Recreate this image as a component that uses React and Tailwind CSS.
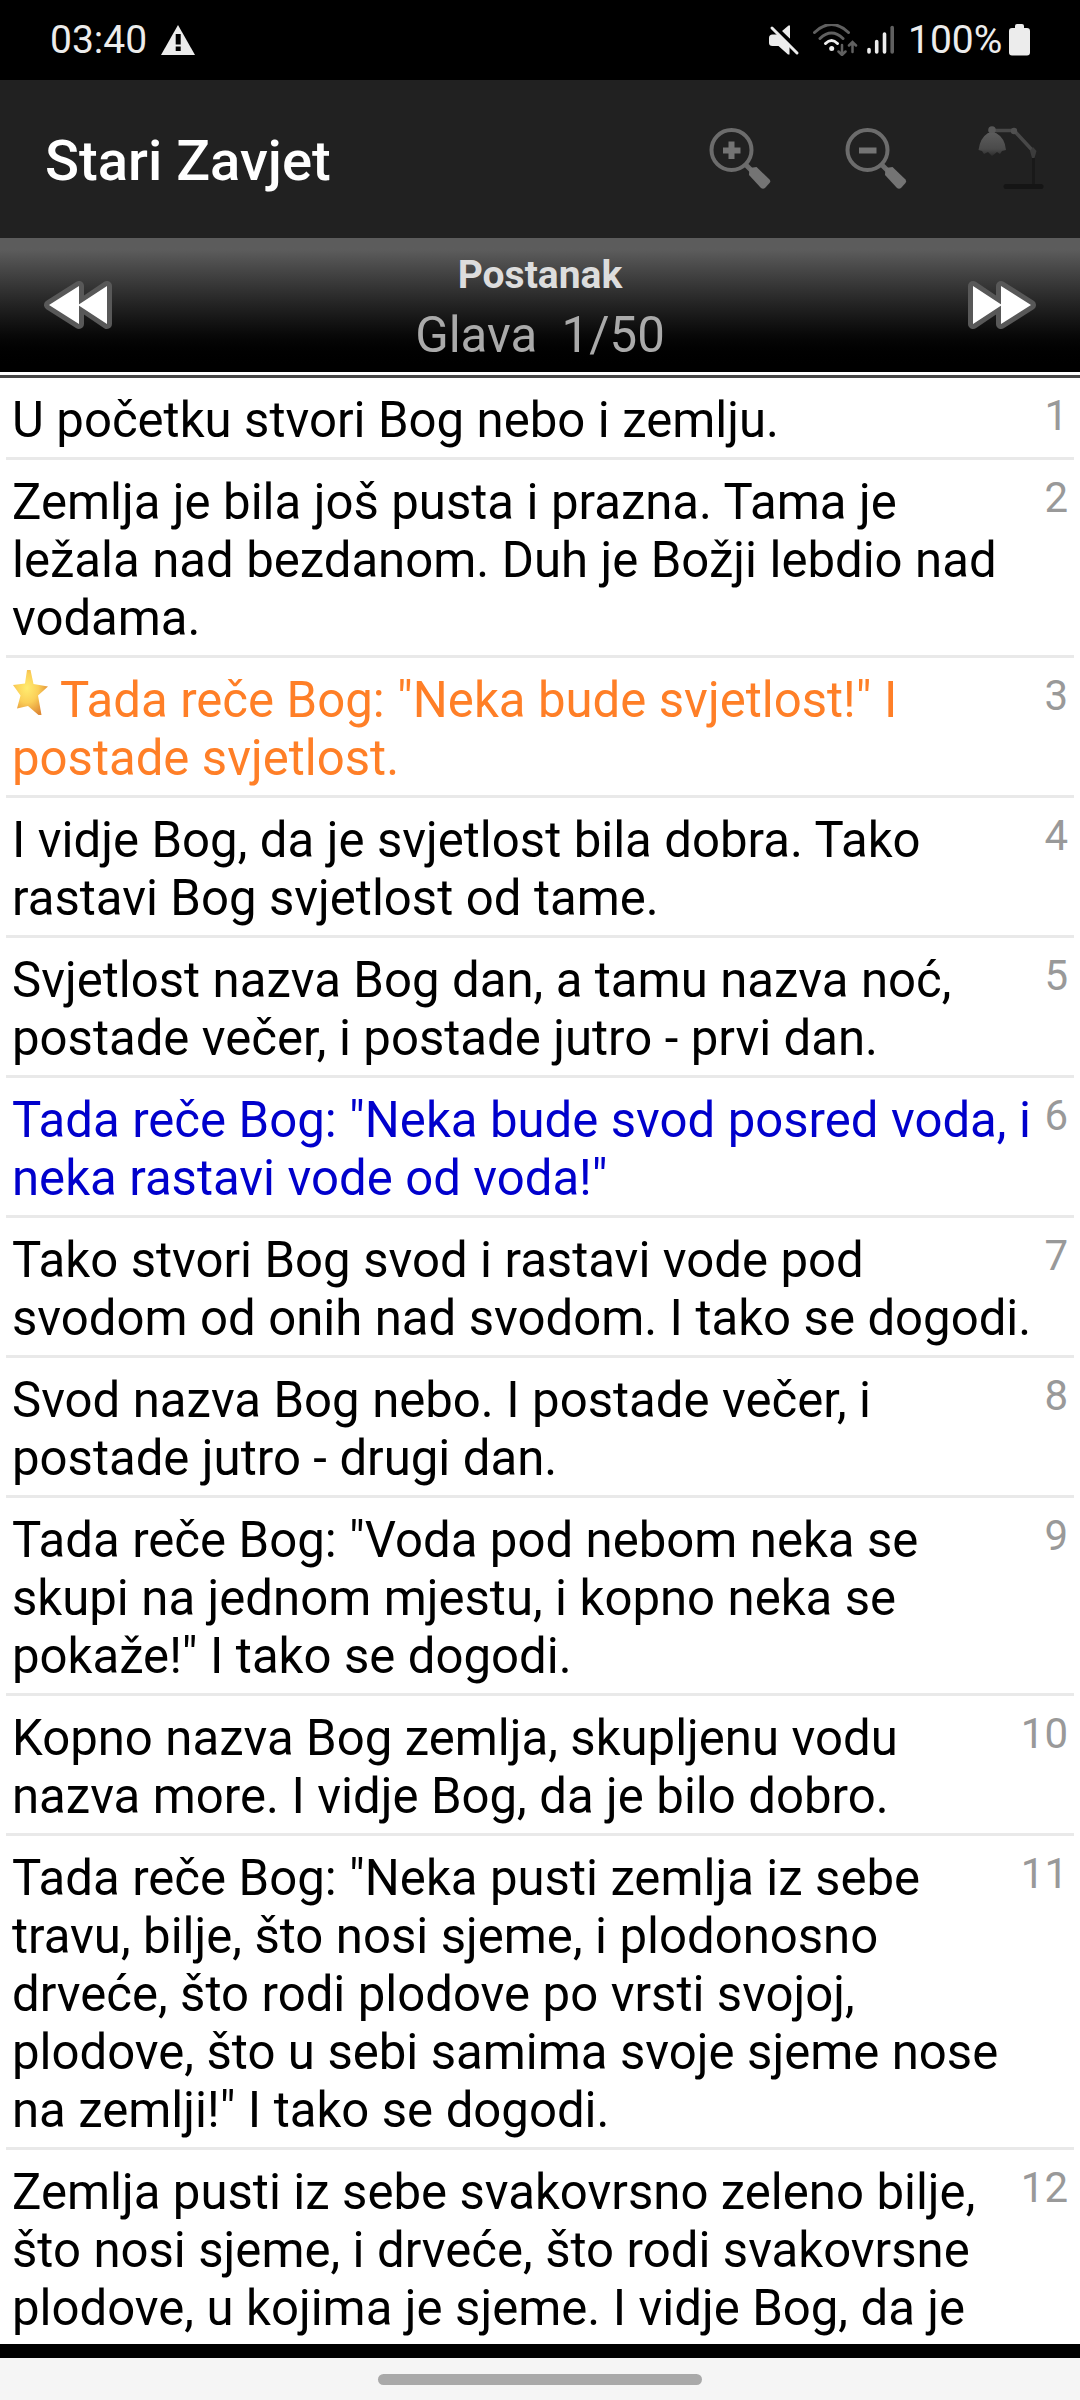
const VERSES = [
  { lines: ["U početku stvori Bog nebo i zemlju."] },
  { lines: ["Zemlja je bila još pusta i prazna. Tama je", "ležala nad bezdanom. Duh je Božji lebdio nad", "vodama."] },
  { lines: ['Tada reče Bog: "Neka bude svjetlost!" I', "postade svjetlost."], color: "text-[#ff7f27]", starred: true },
  { lines: ["I vidje Bog, da je svjetlost bila dobra. Tako", "rastavi Bog svjetlost od tame."] },
  { lines: ["Svjetlost nazva Bog dan, a tamu nazva noć,", "postade večer, i postade jutro - prvi dan."] },
  { lines: ['Tada reče Bog: "Neka bude svod posred voda, i', 'neka rastavi vode od voda!"'], color: "text-[#0000cc]" },
  { lines: ["Tako stvori Bog svod i rastavi vode pod", "svodom od onih nad svodom. I tako se dogodi."] },
  { lines: ["Svod nazva Bog nebo. I postade večer, i", "postade jutro - drugi dan."] },
  { lines: ['Tada reče Bog: "Voda pod nebom neka se', "skupi na jednom mjestu, i kopno neka se", 'pokaže!" I tako se dogodi.'] },
  { lines: ["Kopno nazva Bog zemlja, skupljenu vodu", "nazva more. I vidje Bog, da je bilo dobro."] },
  {
    lines: [
      'Tada reče Bog: "Neka pusti zemlja iz sebe',
      "travu, bilje, što nosi sjeme, i plodonosno",
      "drveće, što rodi plodove po vrsti svojoj,",
      "plodove, što u sebi samima svoje sjeme nose",
      'na zemlji!" I tako se dogodi.'
    ]
  },
  { lines: ["Zemlja pusti iz sebe svakovrsno zeleno bilje,", "što nosi sjeme, i drveće, što rodi svakovrsne", "plodove, u kojima je sjeme. I vidje Bog, da je"] }
];

function StatusBar() {
  return (
    <div className="flex h-20 shrink-0 items-center bg-black pl-[50px] text-[#ececec]">
      <span className="w-[111px] text-[39px] leading-[80px]">03:40</span>
      <svg className="h-[30px] w-[34px] shrink-0" viewBox="0 0 34 30">
        <path d="M17 0 34 30H0Z" fill="#ececec" />
        <path d="M14.7 9h5v10.500h-5zM14.700 21.500h5v4.500h-5z" fill="#000" />
      </svg>

      <svg className="ml-[574px] h-8 w-[139px] shrink-0" viewBox="0 0 139 32" fill="none">
        {/* muted speaker */}
        <path d="M3.500 10.500h7L20.500 20v10.500h-1.500L9.500 22H3.500q-3.500 0-3.500-3v-5q0-3.500 3.500-3.500Z" fill="#ececec" />
        <path d="M12.500 7.500 19.500 1.500h1.500V15Z" fill="#ececec" />
        <path d="M6 2 30 26" stroke="#000" strokeWidth="3" />
        <path d="M3 4 28 29" stroke="#ececec" strokeWidth="3" strokeLinecap="round" />

        {/* wifi with traffic arrows */}
        <g strokeWidth="3" strokeLinecap="round">
          <path d="M45.500 8.500Q62.500-7.500 79.500 8.500M51 14.500Q62.500 3.500 74 14.500" stroke="#606060" />
          <path d="M56.500 19.500Q62.500 13.500 68.500 19.500" stroke="#ececec" />
          <path d="M73 21V30.500M69.500 27.500 73 31 76.500 27.500M83.500 28V18.500M80 21.500 83.500 18 87 21.500" stroke="#606060" strokeWidth="2.500" />
        </g>
        <circle cx="62.700" cy="24.500" r="2.500" fill="#ececec" />

        {/* signal strength */}
        <g strokeWidth="3.600" strokeLinecap="round">
          <path d="M100 25.500V28M107.700 17.500V28M115.500 10V28" stroke="#ececec" />
          <path d="M123.200 3.500V28" stroke="#606060" />
        </g>
      </svg>
      <span className="w-[101px] shrink-0 text-[39px] leading-[80px]">100%</span>
      <svg className="h-8 w-[21px] shrink-0" viewBox="0 0 21 32">
        <path d="M6 2q0-2 2-2h5q2 0 2 2v2h3q3 0 3 3v21.500q0 3-3 3H3q-3 0-3-3V7q0-3 3-3h3Z" fill="#ececec" />
      </svg>
    </div>
  );
}

function ZoomIcon({ plus, className }) {
  return (
    <svg className={`h-[66px] w-[64px] ${className}`} viewBox="0 0 64 66" fill="none">
      <path d="M37 38 45 46" stroke="#6c6c6c" strokeWidth="5" />
      <circle cx="23.500" cy="24" r="20" stroke="#6c6c6c" strokeWidth="4" />
      <path d="M41.500 42 48.500 41 61.500 53.500Q63 55 61.500 57L57 62Q55 63.500 53 62L41 49Z" fill="#747474" />
      <path d="M15 24.500H32.500" stroke="#747474" strokeWidth="6" />
      {plus && <path d="M23.500 15.500V33" stroke="#747474" strokeWidth="6" />}
    </svg>
  );
}

function LampIcon() {
  return (
    <svg className="h-[66px] w-[68px]" viewBox="0 0 68 66" fill="none">
      <defs>
        <linearGradient id="shade" x1="0" y1="0" x2="0" y2="1">
          <stop offset="0" stopColor="#5c5c5c" />
          <stop offset="0.700" stopColor="#4a4a4a" />
          <stop offset="1" stopColor="#2c2c2c" />
        </linearGradient>
      </defs>
      <path d="M16 5.500H38L57 26" stroke="#484848" strokeWidth="3.500" />
      <path d="M57.500 26V59" stroke="#191919" strokeWidth="3" />
      <path d="M30 61.500H65" stroke="#151515" strokeWidth="5" strokeLinecap="round" />
      <circle cx="16" cy="5" r="3.800" fill="#585858" />
      <circle cx="38" cy="6" r="3.200" fill="#505050" />
      <path d="M54 26 57 22 60.500 26 58.500 33H56Z" fill="#3c3c3c" />
      <path d="M12 8H20Q29 13 30 25L26 26 24 29 21 27 16 31 12 27 8 29 6 26 2.500 25Q4 13 12 8Z" fill="url(#shade)" />
    </svg>
  );
}

function SkipIcon({ className }) {
  return (
    <svg className={`h-12 w-[68px] ${className}`} viewBox="0 0 68 48">
      <path
        d="M5 24 35 5V43ZM35 24 63 5V43Z"
        fill="#585858"
        stroke="#585858"
        strokeWidth="10"
        strokeLinejoin="round"
      />
      <path d="M5 24 35 5V43ZM34 24 63 5V43Z" fill="#fff" />
    </svg>
  );
}

function StarIcon() {
  return (
    <svg className="-mt-[22px] mr-3 inline-block h-[46px] w-9 align-middle" viewBox="0 0 36 46">
      <defs>
        <radialGradient id="star" cx="0.400" cy="0.400" r="0.650">
          <stop offset="0" stopColor="#ffec70" />
          <stop offset="0.500" stopColor="#fbcf58" />
          <stop offset="1" stopColor="#df8a35" />
        </radialGradient>
      </defs>
      <path d="M15 0H18.500L21.500 14 36 16.500 26 25.500 29.500 45H26.500L16 36 5 38.500 8.500 25.500 1 15 13 13.500Z" fill="url(#star)" />
    </svg>
  );
}

export default function App() {
  return (
    <div className="flex h-[2400px] w-[1080px] flex-col overflow-hidden bg-white font-['Roboto',sans-serif]">
      <StatusBar />
      <header className="flex h-[158px] shrink-0 items-center bg-[#212121] pr-9 pl-[45px] text-white">
        <h1 className="mt-1 mr-auto text-[56.2px] font-medium">Stari Zavjet</h1>
        <div className="mb-[2px] flex items-center">
          <ZoomIcon plus className="mt-[2px] mr-[72px]" />
          <ZoomIcon className="mt-[2px] mr-[68px]" />
          <LampIcon />
        </div>
      </header>

      <nav className="flex h-[134px] shrink-0 items-start justify-between bg-linear-to-b from-[#5c5c5c] from-9% to-black to-98% px-11">
        <SkipIcon className="mt-[43px]" />
        <div className="text-center">
          <p className="mt-[13px] text-[39px] leading-[48px] font-bold text-[#dddddd]">Postanak</p>
          <p className="mt-[6px] text-[49.2px] leading-[60px] whitespace-pre text-[#aaaaaa]">{"Glava  1/50"}</p>
        </div>
        <SkipIcon className="mt-[43px] rotate-180" />
      </nav>
      <div className="mt-[3px] h-[3px] shrink-0 bg-[#464646]" />

      <ol className="h-[1966px] shrink-0 overflow-hidden">
        {VERSES.map((verse, index) => (
          <li
            key={index}
            className="mx-[6px] flex justify-between border-b-[3px] border-[#e9e9e9] pt-[13px] pr-[6px] pb-2 pl-[6px]"
          >
            <div
              className={`text-[49.1px] leading-[58px] [word-spacing:0.3px] whitespace-nowrap ${verse.color || "text-black"}`}
            >
              {verse.lines.map((line, i) => (
                <p key={line} className="h-[58px]">
                  {verse.starred && i === 0 && <StarIcon />}
                  {line}
                </p>
              ))}
            </div>
            <span className="h-10 text-[42px] leading-[50px] text-[#999999]">{index + 1}</span>
          </li>
        ))}
      </ol>

      <div className="h-[14px] shrink-0 bg-black" />
      <div className="flex h-[42px] shrink-0 justify-center bg-[#f5f5f5] pt-4">
        <div className="h-[11px] w-[324px] rounded-full bg-[#a9a9a9]" />
      </div>
    </div>
  );
}
